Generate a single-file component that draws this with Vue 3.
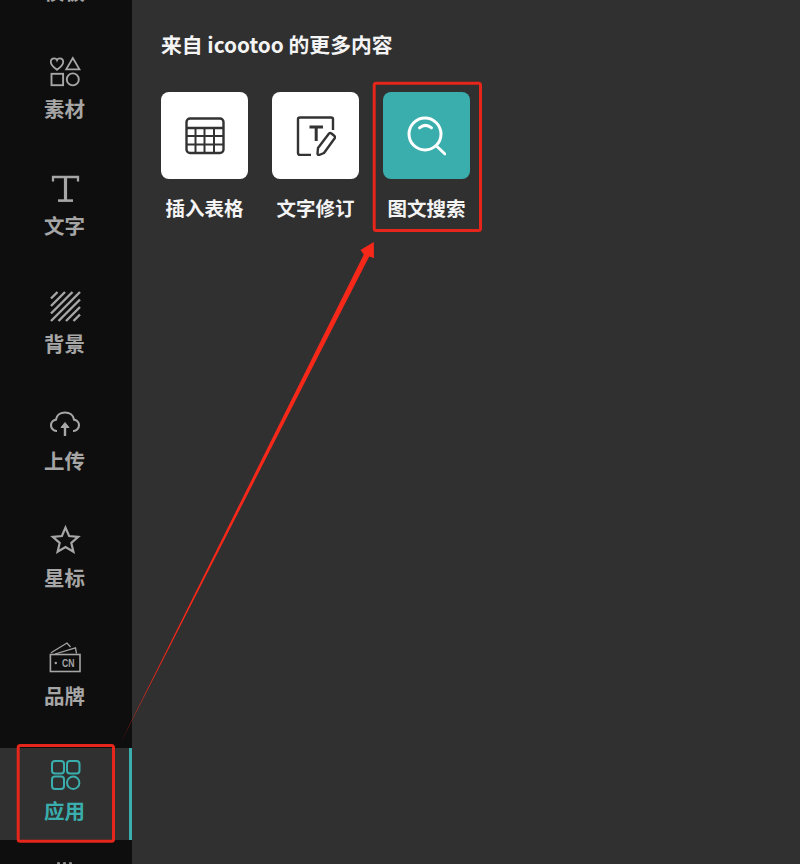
<script setup>
const navItems = [
  { key: 'tpl', label: '模板', icon: 'none' },
  { key: 'el', label: '素材', icon: 'elements' },
  { key: 'text', label: '文字', icon: 'text' },
  { key: 'bg', label: '背景', icon: 'bg' },
  { key: 'up', label: '上传', icon: 'upload' },
  { key: 'star', label: '星标', icon: 'star' },
  { key: 'brand', label: '品牌', icon: 'brand' },
  { key: 'apps', label: '应用', icon: 'apps', active: true },
]
const apps = [
  { label: '插入表格', icon: 'table' },
  { label: '文字修订', icon: 'revise' },
  { label: '图文搜索', icon: 'search', teal: true },
]
</script>

<template>
  <div class="page">
    <aside class="sidebar">
      <div class="nav">
        <div v-for="item in navItems" :key="item.key" class="nav-item" :class="{ active: item.active }">
          <svg class="nav-icon" viewBox="0 0 32 32" fill="none" stroke="currentColor" stroke-width="2">
            <template v-if="item.icon === 'elements'">
              <path d="M8 14.8 C4.5 12.3 1.8 10.2 1.8 7 C1.8 4.8 3.4 3.4 5.2 3.4 C6.4 3.4 7.5 4 8 5.2 C8.5 4 9.6 3.4 10.8 3.4 C12.6 3.4 14.2 4.8 14.2 7 C14.2 10.2 11.5 12.3 8 14.8Z" stroke-width="1.8" />
              <path d="M23.8 3 L30.5 14.4 H17.2 Z" stroke-width="1.8" />
              <rect x="2.5" y="18.8" width="11.6" height="11.4" stroke-width="1.9" />
              <circle cx="23.8" cy="24.4" r="6" stroke-width="1.9" />
            </template>
            <template v-else-if="item.icon === 'text'">
              <path d="M4 9.5 V5 H29 V9.5" stroke-width="2.3" />
              <path d="M16.5 5 V28.5" stroke-width="3.2" />
              <path d="M9 28.6 H24" stroke-width="2.6" />
            </template>
            <template v-else-if="item.icon === 'bg'">
              <path d="M2 8.5 L8.5 2 M2 16 L16 2 M2 23.5 L23.5 2 M2 31 L31 2 M9.5 31 L31 9.5 M17 31 L31 17 M24.5 31 L31 24.5" stroke-width="2.4" />
            </template>
            <template v-else-if="item.icon === 'upload'">
              <path d="M8 24 H7.5 C4.5 24 2 21.4 2 18.3 C2 15.3 4.3 12.9 7 12.6 C7.6 8.3 11.4 5.5 16 5.5 C20.6 5.5 24.4 8.3 25 12.6 C27.7 12.9 30 15.3 30 18.3 C30 21.4 27.5 24 24.5 24 H24" stroke-width="2.1" />
              <path d="M16 29 V17" stroke-width="2.4" />
              <path d="M12 20.5 L16 15.5 L20 20.5 Z" fill="currentColor" stroke-width="1" />
            </template>
            <template v-else-if="item.icon === 'star'">
              <path d="M16.5 3.6 L20.1 12 L29.2 12.8 L22.3 18.9 L24.4 27.8 L16.5 23.1 L8.6 27.8 L10.7 18.9 L3.8 12.8 L12.9 12 Z" stroke-width="2.2" />
            </template>
            <template v-else-if="item.icon === 'brand'">
              <path d="M2 10.7 L18 1 L21.5 5" stroke-width="1.3" />
              <path d="M6 12 L26.5 5.8 L27.5 11.5" stroke-width="1.3" />
              <rect x="1.4" y="12.5" width="29.6" height="17" stroke-width="1.6" />
              <circle cx="6.8" cy="21" r="1.2" fill="currentColor" stroke="none" />
              <text x="13" y="25" textLength="12.5" lengthAdjust="spacingAndGlyphs" class="cn-text">CN</text>
            </template>
            <template v-else-if="item.icon === 'apps'">
              <rect x="3" y="2" width="12" height="12.5" rx="3" />
              <rect x="18" y="2" width="12.5" height="12.5" rx="3" />
              <rect x="3" y="17.5" width="12" height="12.5" rx="3" />
              <circle cx="24.2" cy="23.75" r="6.2" />
            </template>
          </svg>
          <span class="nav-label">{{ item.label }}</span>
          <i v-if="item.active" class="active-bar"></i>
        </div>
        <div class="more-dots"><i></i><i></i><i></i></div>
      </div>
    </aside>

    <main class="panel">
      <h2 class="title">来自 icootoo 的更多内容</h2>
      <div class="apps">
        <div v-for="app in apps" :key="app.label" class="app">
          <div class="tile" :class="{ teal: app.teal }">
            <svg v-if="app.icon === 'table'" class="tile-icon" viewBox="0 0 40 40" fill="none" stroke="#333" stroke-width="2">
              <rect x="1.5" y="2.5" width="37" height="34.5" rx="3.5" stroke-width="2.4" />
              <path d="M1.5 12 H38.5" stroke-width="2.4" />
              <path d="M1.5 20 H38.5 M1.5 28.5 H38.5 M10.5 12 V37 M19.5 12 V37 M29 12 V37" />
            </svg>
            <svg v-else-if="app.icon === 'revise'" class="tile-icon" viewBox="0 0 40 40" fill="none" stroke="#333" stroke-width="2.4" stroke-linejoin="round">
              <path d="M15 39 H4 Q2 39 2 37 V3 Q2 1.5 4 1.5 H35 Q37 1.5 37 3 V14" />
              <path d="M13.5 11 H27 M20.2 11 V25" stroke-width="3" />
              <path d="M22 32 L33 17.5 Q34 16.5 35.5 17.5 L38.5 20 Q39.5 21 38.5 22.5 L28 37 L23 39 Q21.5 39 21.5 37.5 Z" />
            </svg>
            <svg v-else class="tile-icon search-icon" viewBox="0 0 40 40" fill="none" stroke="#fff" stroke-width="3" stroke-linecap="round">
              <circle cx="19" cy="18" r="16" />
              <path d="M31 30.5 L39 38" />
              <path d="M13.5 11.8 Q19.5 7 25.5 11.8" />
            </svg>
          </div>
          <span class="app-label">{{ app.label }}</span>
        </div>
      </div>
    </main>

    <svg class="annotation" viewBox="0 0 800 864" fill="none">
      <rect x="18.2" y="745.5" width="95.3" height="95.7" rx="2" stroke="#e6261a" stroke-width="3" />
      <rect x="374.2" y="83.2" width="106.3" height="147.3" rx="2" stroke="#e6261a" stroke-width="3" />
      <path d="M121 742 L363.8 254.5 L360.5 250 L373.8 242 L374 258 L369.2 256.5 Z" fill="#f5281a" />
    </svg>
  </div>
</template>

<style>
html, body { margin: 0; background: #303030; }
</style>

<style scoped>
.page {
  position: relative;
  display: flex;
  width: 800px;
  height: 864px;
  overflow: hidden;
  background: #303030;
  font-family: "Noto Sans CJK SC", "Noto Sans", sans-serif;
}
.sidebar {
  flex: 0 0 132px;
  height: 864px;
  overflow: hidden;
  background: #0e0e0e;
}
.nav {
  display: flex;
  flex-direction: column;
  gap: 25.33px;
  margin-top: -73.33px;
}
.nav-item {
  position: relative;
  flex: 0 0 92px;
  box-sizing: border-box;
  padding-right: 3px;
  display: flex;
  flex-direction: column;
  align-items: center;
  color: #a6a6a6;
}
.nav-item.active {
  background: #303030;
  color: #3aaeac;
}
.nav-icon {
  width: 32px;
  height: 32px;
  margin-top: 11px;
}
.nav-label {
  margin-top: 6px;
  font-size: 20.5px;
  line-height: 30px;
  font-weight: 700;
}
.active .nav-label {
  margin-top: 4px;
}
.active-bar {
  position: absolute;
  right: 0;
  top: 0;
  bottom: 0;
  width: 3px;
  background: #3aaeac;
}
.cn-text {
  font-family: "Liberation Sans", sans-serif;
  font-size: 11px;
  font-weight: 700;
  fill: currentColor;
  stroke: none;
}
.more-dots {
  display: flex;
  justify-content: center;
  gap: 3.5px;
  margin-top: -3px;
  padding-right: 3px;
}
.more-dots i {
  width: 2.5px;
  height: 2.5px;
  border-radius: 50%;
  background: #8a8a8a;
}
.panel {
  flex: 1;
  padding: 28px 0 0 29px;
  color: #fff;
}
.title {
  margin: 0;
  font-size: 20.8px;
  line-height: 32px;
  font-weight: 700;
  color: #f4f4f4;
}
.apps {
  display: flex;
  gap: 24px;
  margin-top: 32px;
}
.app {
  display: flex;
  flex-direction: column;
  align-items: center;
  width: 87px;
}
.tile {
  display: flex;
  align-items: center;
  justify-content: center;
  width: 87px;
  height: 87px;
  border-radius: 8px;
  background: #fff;
}
.tile.teal {
  background: #3aaeac;
}
.tile-icon {
  width: 40px;
  height: 40px;
}
.search-icon {
  margin-left: -2px;
}
.app-label {
  margin-top: 14px;
  font-size: 19.5px;
  line-height: 30px;
  font-weight: 700;
  white-space: nowrap;
  color: #f4f4f4;
}
.annotation {
  position: absolute;
  left: 0;
  top: 0;
  width: 800px;
  height: 864px;
  pointer-events: none;
}
</style>
